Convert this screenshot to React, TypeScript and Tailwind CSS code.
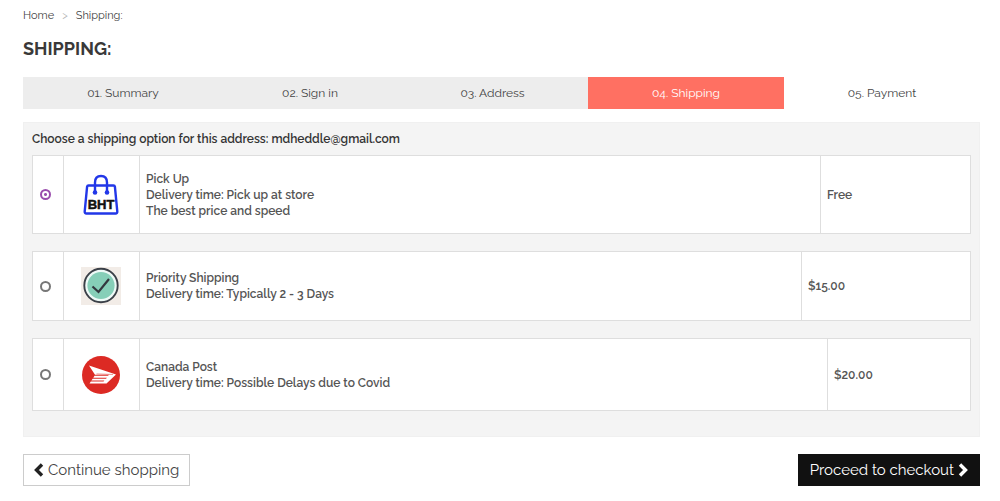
import { useState } from "react";
import type { ReactNode } from "react";
import clsx from "clsx";

interface Option {
  id: string;
  lines: string[];
  price: string;
  logo: ReactNode;
  rowClass: string;
  priceClass: string;
}

const BagLogo = () => (
  <svg viewBox="0 0 36 42" className="block h-[42px] w-9" role="img" aria-label="BHT">
    <g fill="none" stroke="#2237e8" strokeWidth="2.400" strokeLinejoin="round">
      <path d="M5.500 11.500H30.500Q31.700 11.500 31.900 12.700L34.300 37.500Q34.400 39.500 32.600 39.500H3.400Q1.600 39.500 1.700 37.500L4.100 12.700Q4.300 11.500 5.500 11.500Z" />
      <path d="M12 18V8.500Q12 2 18 2Q24 2 24 8.500V18" />
    </g>
    <circle cx="12" cy="18.500" r="2.300" fill="#2237e8" />
    <circle cx="24" cy="18.500" r="2.300" fill="#2237e8" />
    <text
      x="18"
      y="35"
      textAnchor="middle"
      fontSize="13"
      fontWeight="bold"
      fontFamily="'Liberation Sans Narrow', 'Liberation Sans', sans-serif"
      fill="#111"
      stroke="#111"
      strokeWidth="0.500"
    >
      BHT
    </text>
  </svg>
);

const CheckLogo = () => (
  <svg viewBox="0 0 40 38" className="block h-[38px] w-10" aria-hidden="true">
    <rect width="40" height="38" fill="#f2ece7" />
    <circle cx="20" cy="18.500" r="16.700" fill="#eefaf7" stroke="#3b4048" strokeWidth="1.900" />
    <circle cx="20" cy="18.500" r="13.600" fill="#86cfb8" />
    <path d="M11.500 19.500L17.500 25L28 12" fill="none" stroke="#33383f" strokeWidth="2.200" />
  </svg>
);

const CanadaPostLogo = () => (
  <svg viewBox="0 0 40 40" className="block size-10" aria-hidden="true">
    <circle cx="20" cy="20" r="19" fill="#dc2a24" />
    <path d="M8 10.500L35 19.500L25.500 28.500H8.500L9.800 26.600H22.500L23.400 25.600H10.400L11.700 23.700H25L25.900 22.700H12.300L13.500 20.800H27L28 19.700H14Z" fill="#fff" />
    <path d="M15.500 18.900L32 19.500" stroke="#dc2a24" strokeWidth="0.500" />
  </svg>
);

const steps = ["01. Summary", "02. Sign in", "03. Address", "04. Shipping", "05. Payment"];

const options: Option[] = [
  {
    id: "pickup",
    lines: ["Pick Up", "Delivery time: Pick up at store", "The best price and speed"],
    price: "Free",
    logo: <BagLogo />,
    rowClass: "h-[78px]",
    priceClass: "w-[150px]",
  },
  {
    id: "priority",
    lines: ["Priority Shipping", "Delivery time: Typically 2 - 3 Days"],
    price: "$15.00",
    logo: <CheckLogo />,
    rowClass: "h-[69px]",
    priceClass: "w-[169px]",
  },
  {
    id: "canada-post",
    lines: ["Canada Post", "Delivery time: Possible Delays due to Covid"],
    price: "$20.00",
    logo: <CanadaPostLogo />,
    rowClass: "h-[72px]",
    priceClass: "w-[143px]",
  },
];

const Chevron = ({ right = false }: { right?: boolean }) => (
  <svg viewBox="0 0 10 14" className="h-3.5 w-2.5 shrink-0" aria-hidden="true">
    <path
      d={right ? "M2 1.500L7.500 7L2 12.500" : "M8 1.500L2.500 7L8 12.500"}
      fill="none"
      stroke="currentColor"
      strokeWidth="3.400"
    />
  </svg>
);

const App = () => {
  const [selected, setSelected] = useState<string>("pickup");

  return (
    <main className="bg-white pt-2 pr-5 pb-4 pl-[23px] font-['Raleway','Lato',sans-serif] text-xs leading-4 text-[#444]">
      <nav aria-label="Breadcrumb" className="flex gap-2 text-[11px] leading-4">
        <a href="#">Home</a>
        <span className="text-[#b5b5b5]">&gt;</span>
        <span>Shipping:</span>
      </nav>

      <h1 className="mt-3 text-lg leading-[26px] font-bold text-[#3a3939] uppercase">Shipping:</h1>

      <ol className="mt-[15px] grid grid-cols-[200fr_174fr_191fr_196fr_196fr] text-center leading-8">
        {steps.map((step, index) => (
          <li
            key={step}
            aria-current={index === 3 ? "step" : undefined}
            className={clsx(
              index < 3 && "bg-[#ededed]",
              index === 3 && "bg-[#ff7062] text-white",
            )}
          >
            {step}
          </li>
        ))}
      </ol>

      <form onSubmit={(e) => e.preventDefault()}>
        <section className="mt-[13px] border border-[#f0f0f0] bg-[#f4f4f4] px-2 pt-2 pb-2">
          <h2 className="mb-2 font-semibold text-[#333]">
            Choose a shipping option for this address: mdheddle@gmail.com
          </h2>
          {options.map((option) => (
            <table
              key={option.id}
              className="mb-[17px] w-full border-collapse border border-[#dedede] bg-white font-semibold text-[#555]"
            >
              <tbody>
                <tr className={option.rowClass}>
                  <td className="w-[31px] border border-[#dedede] pl-[7px]">
                    <input
                      type="radio"
                      name="shipping"
                      id={option.id}
                      checked={selected === option.id}
                      onChange={() => setSelected(option.id)}
                      className="block size-[11px] appearance-none rounded-full border-2 border-[#777] bg-white checked:border-[#9a4dad] checked:bg-[radial-gradient(circle,#9a4dad_1px,white_2px)]"
                    />
                  </td>
                  <td className="w-[76px] border border-[#dedede]">
                    <div className="flex justify-center pr-px">{option.logo}</div>
                  </td>
                  <td className="border border-[#dedede] px-1.5">
                    <label htmlFor={option.id} className="block">
                      {option.lines.map((line) => (
                        <span key={line} className="block">
                          {line}
                        </span>
                      ))}
                    </label>
                  </td>
                  <td className={clsx("border border-[#dedede] px-1.5", option.priceClass)}>
                    {option.price}
                  </td>
                </tr>
              </tbody>
            </table>
          ))}
        </section>

        <div className="mt-[17px] flex items-center justify-between text-[15px]">
          <a
            href="#"
            className="flex h-8 items-center gap-1 border border-[#ccc] bg-white px-2.5 text-[#444]"
          >
            <span className="text-[#222]">
              <Chevron />
            </span>
            Continue shopping
          </a>
          <button
            type="submit"
            className="flex h-8 items-center gap-1 bg-[#111] px-3 text-white"
          >
            Proceed to checkout
            <Chevron right />
          </button>
        </div>
      </form>
    </main>
  );
};

export default App;
